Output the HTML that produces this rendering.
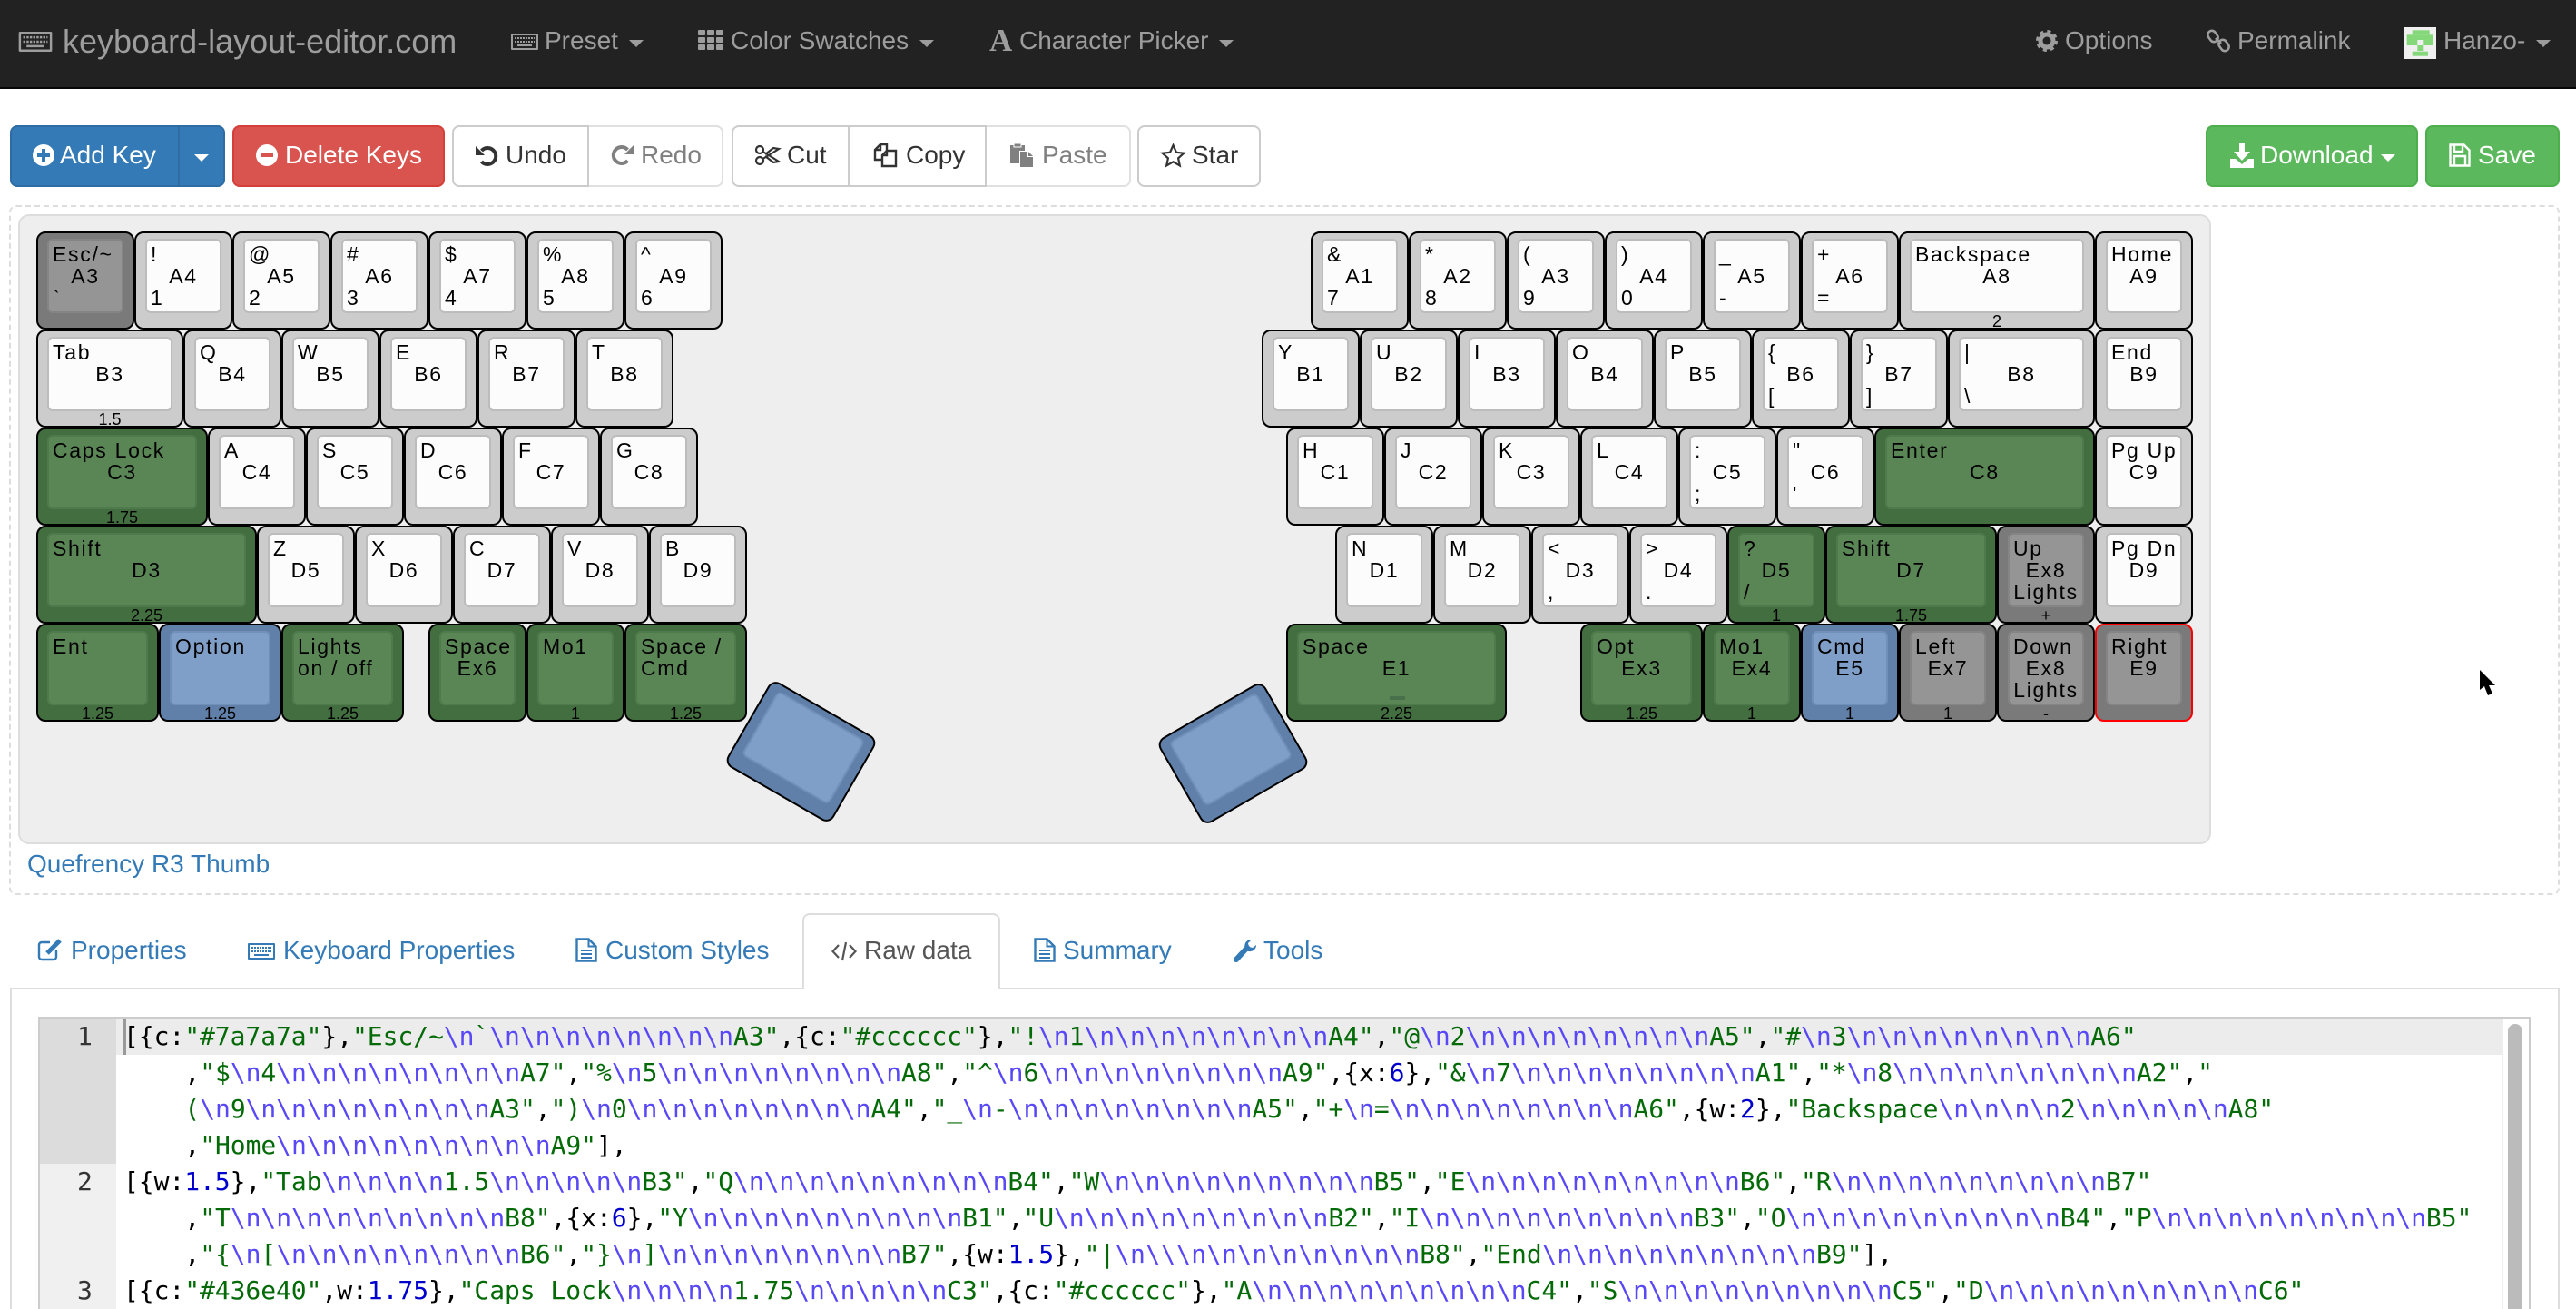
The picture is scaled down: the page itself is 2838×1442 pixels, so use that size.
<!DOCTYPE html>
<html><head><meta charset="utf-8"><title>keyboard-layout-editor.com</title>
<style>
html,body{margin:0;padding:0;width:2838px;height:1442px;overflow:hidden;background:#fff}
body{position:relative;font-family:"Liberation Sans",sans-serif;color:#333}
.t{position:absolute;white-space:nowrap;font-size:28px;line-height:32px}
.n{color:#9d9d9d;top:29px}
.w{color:#fff;top:155px}
.l{color:#337ab7;top:1031px}
svg{position:absolute;overflow:visible}
.car{position:absolute;width:0;height:0;border-left:8px solid transparent;border-right:8px solid transparent;border-top:8px solid #9d9d9d}
.b{position:absolute;top:138px;height:68px;box-sizing:border-box;border:2px solid #ccc;background:#fff;border-radius:8px}
.r{position:absolute;left:0;width:0;height:0}
.k{position:absolute;top:0;width:108px;height:108px;box-sizing:border-box;border:2px solid #000;border-radius:10px;background:#ccc;font-size:23px;line-height:24px;letter-spacing:1.7px;color:#000}
.k>i{position:absolute;left:10px;right:10px;top:6px;bottom:16px;box-sizing:border-box;border:2px solid #bcbcbc;border-radius:6px;background:#fcfcfc}
.g{background:#436e40}.g>i{background:#5a8656;border-color:#4f7a4b}
.e{background:#7a7a7a}.e>i{background:#959595;border-color:#858585}
.u{background:#6080a9}.u>i{background:#7f9fc8;border-color:#7090b9}
.k span{position:absolute;white-space:nowrap}
.a{left:16px;top:11px}.a2{left:16px;top:35px}.a3{left:16px;top:59px}
.k .c,.k .c3,.k .f{left:0;right:0;text-align:center}
.c{top:35px}.c3{top:59px}
.k .f{top:87px;font-size:18px;line-height:20px;letter-spacing:0}
.ln{position:absolute;left:136px;white-space:pre;font-family:"DejaVu Sans Mono",monospace;font-size:28px;line-height:40px;height:40px;color:#000;letter-spacing:-.06px}
.in{padding-left:67.4px}
.ln i{font-style:normal;color:#036a07}
.ln u{text-decoration:none;color:#5848f6}
.ln b{font-weight:normal;color:#0000cd}
.gn{position:absolute;left:85px;font-family:"DejaVu Sans Mono",monospace;font-size:28px;line-height:40px;color:#333}
</style></head><body>

<!-- navbar -->
<div style="position:absolute;left:0;top:0;width:2838px;height:96px;background:#222;border-bottom:2px solid #080808"></div>
<svg style="left:20px;top:35px" width="38" height="22" viewBox="0 0 30 18" fill="#9d9d9d"><path fill-rule="evenodd" d="M1 0h28a1 1 0 0 1 1 1v16a1 1 0 0 1-1 1H1a1 1 0 0 1-1-1V1a1 1 0 0 1 1-1zM2 2v14h26V2z"/><path d="M4 5h22M4 9h22" stroke="#9d9d9d" stroke-width="2" stroke-dasharray="2 1" fill="none"/><rect x="7" y="12" width="16" height="2"/></svg>
<div class="t" style="left:69px;top:26px;font-size:36px;line-height:40px;color:#9d9d9d">keyboard-layout-editor.com</div>
<svg style="left:563px;top:37px" width="30" height="18" viewBox="0 0 30 18" fill="#9d9d9d"><path fill-rule="evenodd" d="M1 0h28a1 1 0 0 1 1 1v16a1 1 0 0 1-1 1H1a1 1 0 0 1-1-1V1a1 1 0 0 1 1-1zM2 2v14h26V2z"/><path d="M4 5h22M4 9h22" stroke="#9d9d9d" stroke-width="2" stroke-dasharray="2 1" fill="none"/><rect x="7" y="12" width="16" height="2"/></svg>
<div class="t n" style="left:600px">Preset</div><div class="car" style="left:693px;top:44px"></div>
<svg style="left:769px;top:33px" width="28" height="22" viewBox="0 0 28 22" fill="#9d9d9d"><rect width="8" height="6" rx="1"/><rect x="10" width="8" height="6" rx="1"/><rect x="20" width="8" height="6" rx="1"/><rect y="8" width="8" height="6" rx="1"/><rect x="10" y="8" width="8" height="6" rx="1"/><rect x="20" y="8" width="8" height="6" rx="1"/><rect y="16" width="8" height="6" rx="1"/><rect x="10" y="16" width="8" height="6" rx="1"/><rect x="20" y="16" width="8" height="6" rx="1"/></svg>
<div class="t n" style="left:805px">Color Swatches</div><div class="car" style="left:1013px;top:44px"></div>
<div class="t" style="left:1090px;top:25px;font:bold 35px/40px 'Liberation Serif',serif;color:#9d9d9d">A</div>
<div class="t n" style="left:1123px">Character Picker</div><div class="car" style="left:1343px;top:44px"></div>

<svg style="left:2243px;top:33px" width="24" height="24" viewBox="0 0 24 24" fill="none" stroke="#9d9d9d"><circle cx="12" cy="12" r="7" stroke-width="5"/><circle cx="12" cy="12" r="10.500" stroke-width="3" stroke-dasharray="4.100 4.150"/></svg>
<div class="t n" style="left:2275px">Options</div>
<svg style="left:2431px;top:32px" width="26" height="26" viewBox="0 0 26 26" fill="none" stroke="#9d9d9d" stroke-width="2.600"><rect x="2.500" y="1.500" width="9" height="13" rx="4.500" transform="rotate(-35 7 8)"/><rect x="14.500" y="11.500" width="9" height="13" rx="4.500" transform="rotate(-35 19 18)"/><path d="M10 10l6 6"/></svg>
<div class="t n" style="left:2465px">Permalink</div>
<svg style="left:2649px;top:30px" width="35" height="35" viewBox="0 0 35 35"><rect width="35" height="35" fill="#f0f0f0"/><g fill="#84d87a"><rect x="8.700" y="3.300" width="19" height="5"/><rect x="2.700" y="8.300" width="29" height="5.700"/><rect x="2.700" y="14" width="11.600" height="6"/><rect x="20.300" y="14" width="11.400" height="6"/><rect x="14.300" y="20" width="6" height="6"/><rect x="8.700" y="26.700" width="17.300" height="5"/></g></svg>
<div class="t n" style="left:2692px">Hanzo-</div><div class="car" style="left:2794px;top:44px"></div>

<!-- toolbar -->
<div class="b" style="left:11px;width:237px;background:#337ab7;border-color:#2e6da4"></div>
<div style="position:absolute;left:196px;top:138px;width:2px;height:68px;background:#2e6da4"></div>
<svg style="left:36px;top:159px" width="24" height="24" viewBox="0 0 24 24"><circle cx="12" cy="12" r="12" fill="#fff"/><path d="M10 5h4v5h5v4h-5v5h-4v-5H5v-4h5z" fill="#337ab7"/></svg>
<div class="t w" style="left:66px">Add Key</div>
<div class="car" style="left:214px;top:170px;border-top-color:#fff"></div>
<div class="b" style="left:256px;width:234px;background:#d9534f;border-color:#d43f3a"></div>
<svg style="left:282px;top:159px" width="24" height="24" viewBox="0 0 24 24"><circle cx="12" cy="12" r="12" fill="#fff"/><rect x="5" y="10" width="14" height="4" fill="#d9534f"/></svg>
<div class="t w" style="left:314px">Delete Keys</div>

<div class="b" style="left:647px;width:150px;border-color:#e0e0e0;border-radius:0 8px 8px 0"></div>
<div class="b" style="left:498px;width:151px;border-radius:8px 0 0 8px"></div>
<svg style="left:524px;top:160px" width="25" height="23" viewBox="0 0 25 23"><path d="M6.500 6A9 9 0 1 1 6.500 18" fill="none" stroke="#333" stroke-width="4"/><path d="M0 1v10h10z" fill="#333"/></svg>
<div class="t" style="left:557px;top:155px">Undo</div>
<svg style="left:673px;top:159px" width="25" height="23" viewBox="0 0 25 23"><path d="M18.500 6A9 9 0 1 0 18.500 18" fill="none" stroke="#808080" stroke-width="4"/><path d="M25 1v10h-10z" fill="#808080"/></svg>
<div class="t" style="left:706px;top:155px;color:#808080">Redo</div>

<div class="b" style="left:1085px;width:161px;border-color:#e0e0e0;border-radius:0 8px 8px 0"></div>
<div class="b" style="left:934px;width:153px;border-radius:0"></div>
<div class="b" style="left:806px;width:130px;border-radius:8px 0 0 8px"></div>
<svg style="left:831px;top:159px" width="28" height="24" viewBox="0 0 28 24" fill="none" stroke="#333" stroke-width="2.200"><circle cx="6" cy="6" r="4"/><circle cx="6" cy="18" r="4"/><path d="M9.500 8L27 19l-6 1-9-7M9.500 16L27 5l-6-1-9 7"/></svg>
<div class="t" style="left:867px;top:155px">Cut</div>
<svg style="left:962px;top:157px" width="26" height="27" viewBox="0 0 26 27" fill="none" stroke="#333" stroke-width="2.400"><path d="M10 19H2V8l6-6h7v7M2 8h6V2"/><path d="M15 9h10v17H10V14zM10 14h5V9"/></svg>
<div class="t" style="left:998px;top:155px">Copy</div>
<svg style="left:1112px;top:157px" width="27" height="27" viewBox="0 0 27 27" fill="#808080"><path d="M1 3h16v6h-6v14H1z"/><path d="M5 1h8v4H5z" fill="#808080" stroke="#fff" stroke-width="1"/><path d="M12 10h8v6h6v11H12z"/><path d="M21 10l5 5h-5z"/></svg>
<div class="t" style="left:1148px;top:155px;color:#808080">Paste</div>
<div class="b" style="left:1253px;width:136px"></div>
<svg style="left:1279px;top:158px" width="27" height="26" viewBox="0 0 27 26"><path d="M13.500 2l3.500 7.800 8.300.9-6.200 5.600 1.700 8.200-7.300-4.200-7.300 4.200 1.700-8.200-6.200-5.600 8.300-.9z" fill="none" stroke="#333" stroke-width="2.200"/></svg>
<div class="t" style="left:1313px;top:155px">Star</div>

<div class="b" style="left:2430px;width:234px;background:#5cb85c;border-color:#4cae4c"></div>
<svg style="left:2457px;top:157px" width="26" height="28" viewBox="0 0 26 28" fill="#fff"><path d="M10 0h6v10h6l-9 10-9-10h6z"/><path d="M0 18h6l7 6 7-6h6v10H0z"/></svg>
<div class="t w" style="left:2490px">Download</div>
<div class="car" style="left:2623px;top:170px;border-top-color:#fff"></div>
<div class="b" style="left:2672px;width:148px;background:#5cb85c;border-color:#4cae4c"></div>
<svg style="left:2698px;top:158px" width="24" height="26" viewBox="0 0 24 26" fill="none" stroke="#fff" stroke-width="2.400"><path d="M1.500 1.500h15l6 6v17h-21z"/><path d="M6 24.500V14h12v10.500M6 1.500V9h9V1.500"/></svg>
<div class="t w" style="left:2730px">Save</div>

<!-- keyboard area -->
<div style="position:absolute;left:10px;top:226px;width:2810px;height:760px;box-sizing:border-box;border:2px dashed #ddd;border-radius:8px"></div>
<div style="position:absolute;left:20px;top:236px;width:2416px;height:694px;box-sizing:border-box;background:#eee;border:2px solid #ddd;border-radius:12px"></div>

<div class="r" style="top:255px">
<div class="k e" style="left:40px"><i></i><span class="a">Esc/~</span><span class="c">A3</span><span class="a3">`</span></div>
<div class="k" style="left:148px"><i></i><span class="a">!</span><span class="c">A4</span><span class="a3">1</span></div>
<div class="k" style="left:256px"><i></i><span class="a">@</span><span class="c">A5</span><span class="a3">2</span></div>
<div class="k" style="left:364px"><i></i><span class="a">#</span><span class="c">A6</span><span class="a3">3</span></div>
<div class="k" style="left:472px"><i></i><span class="a">$</span><span class="c">A7</span><span class="a3">4</span></div>
<div class="k" style="left:580px"><i></i><span class="a">%</span><span class="c">A8</span><span class="a3">5</span></div>
<div class="k" style="left:688px"><i></i><span class="a">^</span><span class="c">A9</span><span class="a3">6</span></div>
<div class="k" style="left:1444px"><i></i><span class="a">&amp;</span><span class="c">A1</span><span class="a3">7</span></div>
<div class="k" style="left:1552px"><i></i><span class="a">*</span><span class="c">A2</span><span class="a3">8</span></div>
<div class="k" style="left:1660px"><i></i><span class="a">(</span><span class="c">A3</span><span class="a3">9</span></div>
<div class="k" style="left:1768px"><i></i><span class="a">)</span><span class="c">A4</span><span class="a3">0</span></div>
<div class="k" style="left:1876px"><i></i><span class="a">_</span><span class="c">A5</span><span class="a3">-</span></div>
<div class="k" style="left:1984px"><i></i><span class="a">+</span><span class="c">A6</span><span class="a3">=</span></div>
<div class="k" style="left:2092px;width:216px"><i></i><span class="a">Backspace</span><span class="c">A8</span><span class="f">2</span></div>
<div class="k" style="left:2308px"><i></i><span class="a">Home</span><span class="c">A9</span></div>
</div>

<div class="r" style="top:363px">
<div class="k" style="left:40px;width:162px"><i></i><span class="a">Tab</span><span class="c">B3</span><span class="f">1.5</span></div>
<div class="k" style="left:202px"><i></i><span class="a">Q</span><span class="c">B4</span></div>
<div class="k" style="left:310px"><i></i><span class="a">W</span><span class="c">B5</span></div>
<div class="k" style="left:418px"><i></i><span class="a">E</span><span class="c">B6</span></div>
<div class="k" style="left:526px"><i></i><span class="a">R</span><span class="c">B7</span></div>
<div class="k" style="left:634px"><i></i><span class="a">T</span><span class="c">B8</span></div>
<div class="k" style="left:1390px"><i></i><span class="a">Y</span><span class="c">B1</span></div>
<div class="k" style="left:1498px"><i></i><span class="a">U</span><span class="c">B2</span></div>
<div class="k" style="left:1606px"><i></i><span class="a">I</span><span class="c">B3</span></div>
<div class="k" style="left:1714px"><i></i><span class="a">O</span><span class="c">B4</span></div>
<div class="k" style="left:1822px"><i></i><span class="a">P</span><span class="c">B5</span></div>
<div class="k" style="left:1930px"><i></i><span class="a">{</span><span class="c">B6</span><span class="a3">[</span></div>
<div class="k" style="left:2038px"><i></i><span class="a">}</span><span class="c">B7</span><span class="a3">]</span></div>
<div class="k" style="left:2146px;width:162px"><i></i><span class="a">|</span><span class="c">B8</span><span class="a3">\</span></div>
<div class="k" style="left:2308px"><i></i><span class="a">End</span><span class="c">B9</span></div>
</div>

<div class="r" style="top:471px">
<div class="k g" style="left:40px;width:189px"><i></i><span class="a">Caps Lock</span><span class="c">C3</span><span class="f">1.75</span></div>
<div class="k" style="left:229px"><i></i><span class="a">A</span><span class="c">C4</span></div>
<div class="k" style="left:337px"><i></i><span class="a">S</span><span class="c">C5</span></div>
<div class="k" style="left:445px"><i></i><span class="a">D</span><span class="c">C6</span></div>
<div class="k" style="left:553px"><i></i><span class="a">F</span><span class="c">C7</span></div>
<div class="k" style="left:661px"><i></i><span class="a">G</span><span class="c">C8</span></div>
<div class="k" style="left:1417px"><i></i><span class="a">H</span><span class="c">C1</span></div>
<div class="k" style="left:1525px"><i></i><span class="a">J</span><span class="c">C2</span></div>
<div class="k" style="left:1633px"><i></i><span class="a">K</span><span class="c">C3</span></div>
<div class="k" style="left:1741px"><i></i><span class="a">L</span><span class="c">C4</span></div>
<div class="k" style="left:1849px"><i></i><span class="a">:</span><span class="c">C5</span><span class="a3">;</span></div>
<div class="k" style="left:1957px"><i></i><span class="a">"</span><span class="c">C6</span><span class="a3">'</span></div>
<div class="k g" style="left:2065px;width:243px"><i></i><span class="a">Enter</span><span class="c">C8</span></div>
<div class="k" style="left:2308px"><i></i><span class="a">Pg Up</span><span class="c">C9</span></div>
</div>

<div class="r" style="top:579px">
<div class="k g" style="left:40px;width:243px"><i></i><span class="a">Shift</span><span class="c">D3</span><span class="f">2.25</span></div>
<div class="k" style="left:283px"><i></i><span class="a">Z</span><span class="c">D5</span></div>
<div class="k" style="left:391px"><i></i><span class="a">X</span><span class="c">D6</span></div>
<div class="k" style="left:499px"><i></i><span class="a">C</span><span class="c">D7</span></div>
<div class="k" style="left:607px"><i></i><span class="a">V</span><span class="c">D8</span></div>
<div class="k" style="left:715px"><i></i><span class="a">B</span><span class="c">D9</span></div>
<div class="k" style="left:1471px"><i></i><span class="a">N</span><span class="c">D1</span></div>
<div class="k" style="left:1579px"><i></i><span class="a">M</span><span class="c">D2</span></div>
<div class="k" style="left:1687px"><i></i><span class="a">&lt;</span><span class="c">D3</span><span class="a3">,</span></div>
<div class="k" style="left:1795px"><i></i><span class="a">&gt;</span><span class="c">D4</span><span class="a3">.</span></div>
<div class="k g" style="left:1903px"><i></i><span class="a">?</span><span class="c">D5</span><span class="a3">/</span><span class="f">1</span></div>
<div class="k g" style="left:2011px;width:189px"><i></i><span class="a">Shift</span><span class="c">D7</span><span class="f">1.75</span></div>
<div class="k e" style="left:2200px"><i></i><span class="a">Up</span><span class="c">Ex8</span><span class="c3">Lights</span><span class="f">+</span></div>
<div class="k" style="left:2308px"><i></i><span class="a">Pg Dn</span><span class="c">D9</span></div>
</div>

<div class="r" style="top:687px">
<div class="k g" style="left:40px;width:135px"><i></i><span class="a">Ent</span><span class="f">1.25</span></div>
<div class="k u" style="left:175px;width:135px"><i></i><span class="a">Option</span><span class="f">1.25</span></div>
<div class="k g" style="left:310px;width:135px"><i></i><span class="a">Lights</span><span class="a2">on / off</span><span class="f">1.25</span></div>
<div class="k g" style="left:472px"><i></i><span class="a">Space</span><span class="c">Ex6</span></div>
<div class="k g" style="left:580px"><i></i><span class="a">Mo1</span><span class="f">1</span></div>
<div class="k g" style="left:688px;width:135px"><i></i><span class="a">Space /</span><span class="a2">Cmd</span><span class="f">1.25</span></div>
<div class="k g" style="left:1417px;width:243px"><i></i><span class="a">Space</span><span class="c">E1</span><span class="f">2.25</span></div>
<div class="k g" style="left:1741px;width:135px"><i></i><span class="a">Opt</span><span class="c">Ex3</span><span class="f">1.25</span></div>
<div class="k g" style="left:1876px"><i></i><span class="a">Mo1</span><span class="c">Ex4</span><span class="f">1</span></div>
<div class="k u" style="left:1984px"><i></i><span class="a">Cmd</span><span class="c">E5</span><span class="f">1</span></div>
<div class="k e" style="left:2092px"><i></i><span class="a">Left</span><span class="c">Ex7</span><span class="f">1</span></div>
<div class="k e" style="left:2200px"><i></i><span class="a">Down</span><span class="c">Ex8</span><span class="c3">Lights</span><span class="f">-</span></div>
<div class="k e" style="left:2308px;border-color:#f00"><i></i><span class="a">Right</span><span class="c">E9</span></div>
</div>
<div style="position:absolute;left:1531px;top:767px;width:17px;height:4px;background:#48704a"></div>

<div class="k u" style="left:815px;top:774px;width:135px;transform:rotate(30deg)"><i></i></div>
<div class="k u" style="left:1291px;top:776px;width:135px;transform:rotate(-30deg)"><i></i></div>

<div class="t" style="left:30px;top:936px;color:#337ab7">Quefrency R3 Thumb</div>

<!-- tabs -->
<div style="position:absolute;left:11px;top:1088px;width:2809px;height:354px;box-sizing:border-box;border:2px solid #ddd;border-bottom:0"></div>
<div style="position:absolute;left:884px;top:1006px;width:218px;height:84px;box-sizing:border-box;background:#fff;border:2px solid #ddd;border-bottom:0;border-radius:8px 8px 0 0"></div>

<svg style="left:42px;top:1034px" width="28" height="24" viewBox="0 0 28 24" fill="none" stroke="#337ab7"><path d="M13 4H4a3 3 0 0 0-3 3v13a3 3 0 0 0 3 3h13a3 3 0 0 0 3-3v-7" stroke-width="2.400"/><path d="M10 16L24 2" stroke-width="5"/></svg>
<div class="t l" style="left:78px">Properties</div>
<svg style="left:273px;top:1039px" width="30" height="18" viewBox="0 0 30 18" fill="#337ab7"><path fill-rule="evenodd" d="M1 0h28a1 1 0 0 1 1 1v16a1 1 0 0 1-1 1H1a1 1 0 0 1-1-1V1a1 1 0 0 1 1-1zM2 2v14h26V2z"/><path d="M4 5h22M4 9h22" stroke="#337ab7" stroke-width="2" stroke-dasharray="2 1" fill="none"/><rect x="7" y="12" width="16" height="2"/></svg>
<div class="t l" style="left:312px">Keyboard Properties</div>
<svg style="left:634px;top:1033px" width="24" height="27" viewBox="0 0 24 27" fill="none" stroke="#337ab7" stroke-width="2.400"><path d="M1.500 1.500h13l8 8v16h-21z"/><path d="M14.500 1.500v8h8M6 14h12M6 18h12M6 22h12" stroke-width="2"/></svg>
<div class="t l" style="left:667px">Custom Styles</div>
<svg style="left:916px;top:1037px" width="28" height="22" viewBox="0 0 28 22" fill="none" stroke="#555" stroke-width="2.200"><path d="M8 4L1.500 11 8 18M20 4l6.500 7-6.500 7M16 1l-4 20"/></svg>
<div class="t" style="left:952px;top:1031px;color:#555">Raw data</div>
<svg style="left:1139px;top:1033px" width="24" height="27" viewBox="0 0 24 27" fill="none" stroke="#337ab7" stroke-width="2.400"><path d="M1.500 1.500h13l8 8v16h-21z"/><path d="M14.500 1.500v8h8M6 14h12M6 18h12M6 22h12" stroke-width="2"/></svg>
<div class="t l" style="left:1171px">Summary</div>
<svg style="left:1359px;top:1035px" width="26" height="25" viewBox="0 0 26 25" fill="#337ab7"><path d="M3 22L15 9" stroke="#337ab7" stroke-width="6" stroke-linecap="round"/><path d="M25 6a7 7 0 0 1-10 6.500A7 7 0 0 1 20 0l-4 4 1 4 4 1z"/></svg>
<div class="t l" style="left:1392px">Tools</div>

<!-- editor -->
<div style="position:absolute;left:42px;top:1120px;width:2746px;height:322px;box-sizing:border-box;background:#fff;border:2px solid #ccc;border-bottom:0"></div>
<div style="position:absolute;left:44px;top:1122px;width:84px;height:320px;background:#f0f0f0"></div>
<div style="position:absolute;left:44px;top:1122px;width:84px;height:160px;background:#dcdcdc"></div>
<div style="position:absolute;left:128px;top:1122px;width:2628px;height:40px;background:#ececec"></div>
<div style="position:absolute;left:2756px;top:1122px;width:2px;height:320px;background:#eee"></div>
<div style="position:absolute;left:2763px;top:1128px;width:16px;height:330px;background:#bbb;border-radius:8px"></div>
<div style="position:absolute;left:136px;top:1122px;width:3px;height:40px;background:#999"></div>
<div class="gn" style="top:1122px">1</div>
<div class="gn" style="top:1282px">2</div>
<div class="gn" style="top:1402px">3</div>

<div class="ln" style="top:1122px">[{c:<i>"#7a7a7a"</i>},<i>"Esc/~<u>\n</u>`<u>\n\n\n\n\n\n\n\n</u>A3"</i>,{c:<i>"#cccccc"</i>},<i>"!<u>\n</u>1<u>\n\n\n\n\n\n\n\n</u>A4"</i>,<i>"@<u>\n</u>2<u>\n\n\n\n\n\n\n\n</u>A5"</i>,<i>"#<u>\n</u>3<u>\n\n\n\n\n\n\n\n</u>A6"</i></div>
<div class="ln in" style="top:1162px">,<i>"$<u>\n</u>4<u>\n\n\n\n\n\n\n\n</u>A7"</i>,<i>"%<u>\n</u>5<u>\n\n\n\n\n\n\n\n</u>A8"</i>,<i>"^<u>\n</u>6<u>\n\n\n\n\n\n\n\n</u>A9"</i>,{x:<b>6</b>},<i>"&amp;<u>\n</u>7<u>\n\n\n\n\n\n\n\n</u>A1"</i>,<i>"*<u>\n</u>8<u>\n\n\n\n\n\n\n\n</u>A2"</i>,<i>"</i></div>
<div class="ln in" style="top:1202px"><i>(<u>\n</u>9<u>\n\n\n\n\n\n\n\n</u>A3"</i>,<i>")<u>\n</u>0<u>\n\n\n\n\n\n\n\n</u>A4"</i>,<i>"_<u>\n</u>-<u>\n\n\n\n\n\n\n\n</u>A5"</i>,<i>"+<u>\n</u>=<u>\n\n\n\n\n\n\n\n</u>A6"</i>,{w:<b>2</b>},<i>"Backspace<u>\n\n\n\n</u>2<u>\n\n\n\n\n</u>A8"</i></div>
<div class="ln in" style="top:1242px">,<i>"Home<u>\n\n\n\n\n\n\n\n\n</u>A9"</i>],</div>
<div class="ln" style="top:1282px">[{w:<b>1.5</b>},<i>"Tab<u>\n\n\n\n</u>1.5<u>\n\n\n\n\n</u>B3"</i>,<i>"Q<u>\n\n\n\n\n\n\n\n\n</u>B4"</i>,<i>"W<u>\n\n\n\n\n\n\n\n\n</u>B5"</i>,<i>"E<u>\n\n\n\n\n\n\n\n\n</u>B6"</i>,<i>"R<u>\n\n\n\n\n\n\n\n\n</u>B7"</i></div>
<div class="ln in" style="top:1322px">,<i>"T<u>\n\n\n\n\n\n\n\n\n</u>B8"</i>,{x:<b>6</b>},<i>"Y<u>\n\n\n\n\n\n\n\n\n</u>B1"</i>,<i>"U<u>\n\n\n\n\n\n\n\n\n</u>B2"</i>,<i>"I<u>\n\n\n\n\n\n\n\n\n</u>B3"</i>,<i>"O<u>\n\n\n\n\n\n\n\n\n</u>B4"</i>,<i>"P<u>\n\n\n\n\n\n\n\n\n</u>B5"</i></div>
<div class="ln in" style="top:1362px">,<i>"{<u>\n</u>[<u>\n\n\n\n\n\n\n\n</u>B6"</i>,<i>"}<u>\n</u>]<u>\n\n\n\n\n\n\n\n</u>B7"</i>,{w:<b>1.5</b>},<i>"|<u>\n\\\n\n\n\n\n\n\n\n</u>B8"</i>,<i>"End<u>\n\n\n\n\n\n\n\n\n</u>B9"</i>],</div>
<div class="ln" style="top:1402px">[{c:<i>"#436e40"</i>,w:<b>1.75</b>},<i>"Caps Lock<u>\n\n\n\n</u>1.75<u>\n\n\n\n\n</u>C3"</i>,{c:<i>"#cccccc"</i>},<i>"A<u>\n\n\n\n\n\n\n\n\n</u>C4"</i>,<i>"S<u>\n\n\n\n\n\n\n\n\n</u>C5"</i>,<i>"D<u>\n\n\n\n\n\n\n\n\n</u>C6"</i></div>

<!-- mouse cursor -->
<svg style="left:2732px;top:738px" width="20" height="32" viewBox="0 0 20 32"><path d="M0 0v22l5-4 4 10 5-2-4-9h7z" fill="#000" stroke="#fff" stroke-opacity=".75" stroke-width="2" paint-order="stroke"/></svg>
</body></html>
